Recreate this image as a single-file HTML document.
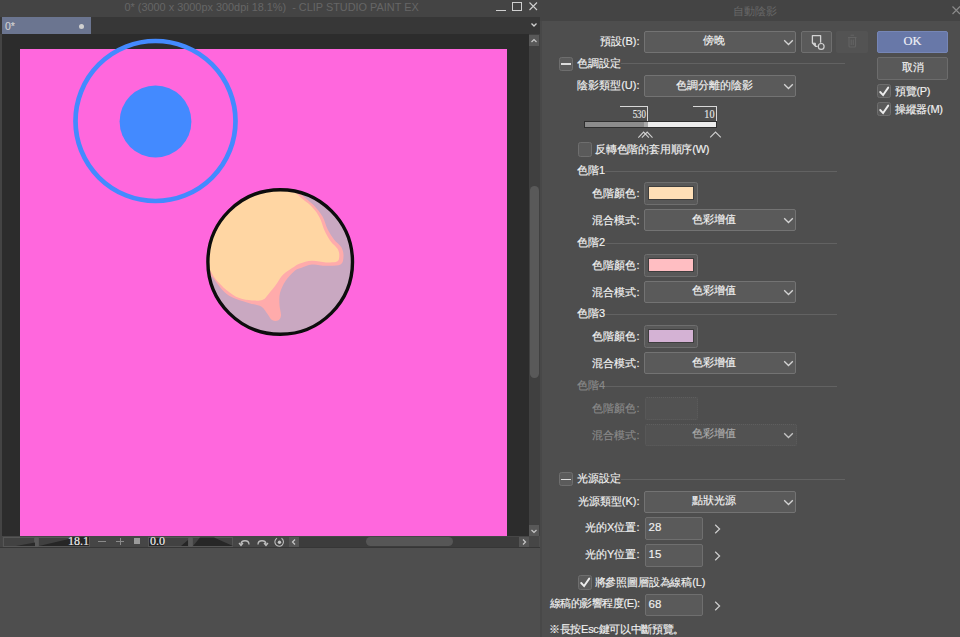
<!DOCTYPE html>
<html><head><meta charset="utf-8">
<style>
*{box-sizing:border-box;margin:0;padding:0}
html,body{width:960px;height:637px;overflow:hidden;background:#4e4e4e;font-family:"Liberation Sans",sans-serif;font-size:11px;color:#f2f2f2}
.a{position:absolute}
.t{position:absolute;white-space:nowrap;line-height:14px;-webkit-text-stroke:0.15px currentColor}
.dd{position:absolute;background:#5a5a5a;border:1px solid #737373;border-radius:2px}
.dd .v{position:absolute;left:0;right:20px;top:3px;text-align:center;line-height:14px;color:#e8e8e8}
.chev{position:absolute;width:8px;height:8px;border-right:1.5px solid #d8d8d8;border-bottom:1.5px solid #d8d8d8;transform:rotate(45deg)}
.sep{position:absolute;height:1px;background:#626262}
.cb{position:absolute;width:14px;height:14px;background:#5c5c5c;border:1px solid #6a6a6a;border-radius:2px}
.sw{position:absolute;width:54px;height:23px;background:#575757;border:1px solid #6a6a6a;border-radius:2px}
.sw i{position:absolute;left:3px;top:4px;width:46px;height:13px}
.inp{position:absolute;width:58px;height:23px;background:#5a5a5a;border:1px solid #6e6e6e;border-radius:2px;padding-left:6px;line-height:20px;color:#e6e6e6}
.arr{position:absolute;width:7px;height:7px;border-right:1.5px solid #cfcfcf;border-top:1.5px solid #cfcfcf;transform:rotate(45deg)}
.lab{text-align:right}
.dis{color:#767676}
</style></head><body>

<!-- ============ APP (left) ============ -->
<div class="a" style="left:0;top:0;width:540px;height:17px;background:#444"></div>
<div class="t" style="left:124.5px;top:0px;color:#666;font-size:10.9px;line-height:14px;-webkit-text-stroke:0">0* (3000 x 3000px 300dpi 18.1%)&nbsp; - CLIP STUDIO PAINT EX</div>
<!-- window buttons -->
<div class="a" style="left:496px;top:10px;width:10px;height:1px;background:#cfcfcf"></div>
<div class="a" style="left:512px;top:2px;width:9.5px;height:9px;border:1px solid #cfcfcf"></div>
<svg class="a" style="left:528px;top:1px" width="11" height="11" viewBox="0 0 11 11"><path d="M1.5 1.5L9 9M9 1.5L1.5 9" stroke="#cfcfcf" stroke-width="1.1"/></svg>

<!-- tab row -->
<div class="a" style="left:0;top:17px;width:540px;height:17px;background:#373737"></div>
<div class="a" style="left:2px;top:17px;width:89px;height:17px;background:#6b7590"></div>
<div class="t" style="left:5px;top:18.5px;color:#d0d0d0;font-size:10.5px">0*</div>
<div class="a" style="left:79px;top:24px;width:5px;height:5px;border-radius:50%;background:#d0d0d0"></div>
<svg class="a" style="left:529px;top:20px" width="10" height="10" viewBox="0 0 10 10"><path d="M2.5 3.5 L5 6 L7.5 3.5" fill="none" stroke="#d0d0d0" stroke-width="1.3"/></svg>

<!-- left strip -->
<div class="a" style="left:0;top:34px;width:2px;height:514px;background:#444"></div>
<!-- canvas bg -->
<div class="a" style="left:2px;top:34px;width:527px;height:502px;background:#2c2c2c"></div>
<!-- pink canvas -->
<div class="a" style="left:19.5px;top:48.5px;width:487.5px;height:487px;background:#ff67dd"></div>
<svg class="a" style="left:0;top:0" width="540" height="540" viewBox="0 0 540 540">
  <defs><clipPath id="cv"><rect x="19.5" y="48.5" width="487.5" height="487"/></clipPath><clipPath id="cp"><circle cx="280.2" cy="262" r="72.5"/></clipPath></defs>
  <circle cx="155.5" cy="121" r="80" fill="none" stroke="#438aff" stroke-width="4.7"/>
  <circle cx="155.5" cy="121.5" r="35.9" fill="#438aff"/>
  <g clip-path="url(#cv)">
  <circle cx="280.2" cy="262" r="72.5" fill="#c9a8c1"/>
  <g clip-path="url(#cp)">
    <path d="M293.0 175.0 C294.1 177.8 296.0 186.9 299.5 192.0 C303.0 197.1 310.2 201.4 314.0 205.5 C317.8 209.6 320.2 212.6 322.5 216.5 C324.8 220.4 325.6 225.2 327.5 229.0 C329.4 232.8 331.7 236.4 334.0 239.5 C336.3 242.6 339.9 244.7 341.5 247.5 C343.1 250.3 343.7 253.7 343.5 256.5 C343.3 259.3 343.4 262.9 340.5 264.5 C337.6 266.1 330.8 265.8 326.0 265.8 C321.2 265.8 316.2 264.1 312.0 264.5 C307.8 264.9 303.9 266.9 301.0 268.0 C298.1 269.1 297.1 268.8 294.5 271.0 C291.9 273.2 287.9 277.3 285.5 281.0 C283.1 284.7 281.0 289.0 280.0 293.0 C279.0 297.0 279.3 301.2 279.5 305.0 C279.7 308.8 281.2 312.9 281.0 315.5 C280.8 318.1 279.5 319.8 278.0 320.5 C276.5 321.2 273.8 321.1 272.0 320.0 C270.2 318.9 269.3 316.2 267.5 314.0 C265.7 311.8 264.6 308.4 261.2 306.5 C257.8 304.6 252.8 304.6 247.0 302.5 C241.2 300.4 232.8 298.7 226.7 294.0 C220.6 289.3 214.6 279.2 210.2 274.5 C205.8 269.8 201.7 267.4 200.0 266.0 L190 266 L190 170 L293 170 Z" fill="#ffabab"/>
    <path d="M290.0 175.0 C291.0 177.9 292.4 187.3 296.0 192.6 C299.6 197.9 307.9 202.5 311.8 206.7 C315.8 210.9 317.6 213.8 319.7 217.7 C321.8 221.6 322.6 226.3 324.4 230.2 C326.2 234.1 328.4 238.1 330.6 241.2 C332.8 244.3 336.2 246.5 337.7 249.0 C339.1 251.5 339.4 253.9 339.3 256.0 C339.2 258.1 339.2 260.5 337.0 261.6 C334.8 262.7 330.2 262.5 326.0 262.4 C321.8 262.3 316.1 260.6 311.8 260.8 C307.5 261.0 302.9 262.5 300.0 263.5 C297.1 264.5 297.0 264.9 294.2 266.7 C291.4 268.5 286.3 271.4 283.2 274.5 C280.1 277.6 277.8 282.4 275.4 285.5 C273.0 288.6 271.1 291.0 269.0 293.4 C266.9 295.8 265.7 298.5 262.8 299.7 C259.9 300.9 255.7 300.7 251.8 300.4 C247.9 300.1 243.4 299.8 239.2 298.1 C235.0 296.4 230.6 293.4 226.7 290.2 C222.8 287.0 218.6 282.6 215.7 279.2 C212.8 275.8 212.0 272.7 209.4 269.8 C206.8 266.9 201.6 263.3 200.0 262.0 L190 262 L190 170 L290 170 Z" fill="#ffd6a3"/>
  </g>
  <circle cx="280.2" cy="262" r="72.3" fill="none" stroke="#0d0d0d" stroke-width="3.4"/>
  </g>
</svg>

<!-- vertical scrollbar -->
<div class="a" style="left:529px;top:34px;width:11px;height:502px;background:#404040"></div>
<div class="a" style="left:529px;top:35px;width:10px;height:11px;background:#585858"></div>
<svg class="a" style="left:529px;top:35.5px" width="10" height="10" viewBox="0 0 10 10"><path d="M2.5 6 L5 3.5 L7.5 6" fill="none" stroke="#c8c8c8" stroke-width="1.2"/></svg>
<div class="a" style="left:529.5px;top:186px;width:9.5px;height:192px;background:#595959;border-radius:5px"></div>
<div class="a" style="left:529px;top:525px;width:10px;height:11px;background:#585858"></div>
<svg class="a" style="left:529px;top:525.5px" width="10" height="10" viewBox="0 0 10 10"><path d="M2.5 4 L5 6.5 L7.5 4" fill="none" stroke="#c8c8c8" stroke-width="1.2"/></svg>

<!-- status bar -->
<div class="a" style="left:2px;top:536px;width:537px;height:11px;background:#464646"></div>
<div class="a" style="left:3px;top:536.5px;width:32px;height:10px;background:#424242;border:1px solid #565656"></div>
<svg class="a" style="left:3px;top:536px" width="33" height="11"><path d="M13 10 L32 6.5 L32 10Z" fill="#2a2a2a"/></svg>
<div class="a" style="left:35px;top:536.5px;width:3px;height:10px;background:#5a5a5a"></div>
<div class="a" style="left:38px;top:536.5px;width:52px;height:10px;background:#404040;border:1px solid #565656"></div>
<svg class="a" style="left:38px;top:536px" width="52" height="11"><path d="M1 10 L33 2.5 L33 1 L51 1 L51 10Z" fill="#262626"/></svg>
<div class="t" style="left:55px;top:535px;width:34px;text-align:right;font-family:'Liberation Serif',serif;font-size:12px;line-height:13px;color:#f0f0f0">18.1</div>
<div class="a" style="left:98px;top:541px;width:8px;height:1px;background:#8a8a8a"></div>
<div class="a" style="left:116px;top:541px;width:8px;height:1px;background:#8a8a8a"></div>
<div class="a" style="left:119.5px;top:538px;width:1px;height:7px;background:#8a8a8a"></div>
<div class="a" style="left:134px;top:538px;width:6px;height:6px;background:#9a9a9a"></div>
<div class="a" style="left:147.5px;top:536.5px;width:41.5px;height:10px;background:#424242;border:1px solid #565656"></div>
<div class="a" style="left:148.5px;top:537.5px;width:15.5px;height:8px;background:#262626"></div>
<svg class="a" style="left:180px;top:537px" width="9" height="9"><path d="M1 9 L8 3 L8 9Z" fill="#262626"/></svg>
<div class="t" style="left:150px;top:535px;font-family:'Liberation Serif',serif;font-size:12px;line-height:13px;color:#f0f0f0">0.0</div>
<div class="a" style="left:189px;top:536.5px;width:2.5px;height:10px;background:#5a5a5a"></div>
<div class="a" style="left:191.5px;top:536.5px;width:41.5px;height:10px;background:#424242;border:1px solid #565656"></div>
<svg class="a" style="left:191.5px;top:536px" width="42" height="11"><path d="M1 10 L8 1.5 L22 1.5 L41 10Z" fill="#272727"/></svg>
<svg class="a" style="left:236px;top:535px" width="52" height="13" viewBox="0 0 52 13">
  <path d="M5 9.5 C5 4.5 13 4.5 13 9.5" fill="none" stroke="#bdbdbd" stroke-width="1.3"/><path d="M3 8 L5 10.5 L7 8" fill="none" stroke="#bdbdbd" stroke-width="1.3"/>
  <path d="M22 9.5 C22 4.5 30 4.5 30 9.5" fill="none" stroke="#bdbdbd" stroke-width="1.3"/><path d="M28 8 L30 10.5 L32 8" fill="none" stroke="#bdbdbd" stroke-width="1.3"/>
  <path d="M41 3.2 A4.3 4.3 0 1 0 45.5 3.3" fill="none" stroke="#bdbdbd" stroke-width="1.1"/><circle cx="43.5" cy="7.2" r="1.7" fill="#c8c8c8"/>
</svg>
<div class="a" style="left:289px;top:536.5px;width:10px;height:10px;background:#555"></div>
<svg class="a" style="left:289px;top:536.5px" width="10" height="10" viewBox="0 0 10 10"><path d="M6 2.5 L3.5 5 L6 7.5" fill="none" stroke="#c8c8c8" stroke-width="1.2"/></svg>
<div class="a" style="left:299px;top:536.5px;width:219.5px;height:10px;background:#3c3c3c"></div>
<div class="a" style="left:365.5px;top:537px;width:87.5px;height:9px;background:#565656;border-radius:5px"></div>
<div class="a" style="left:518.5px;top:536.5px;width:10px;height:10px;background:#555"></div>
<svg class="a" style="left:518.5px;top:536.5px" width="10" height="10" viewBox="0 0 10 10"><path d="M4 2.5 L6.5 5 L4 7.5" fill="none" stroke="#c8c8c8" stroke-width="1.2"/></svg>
<div class="a" style="left:0;top:547px;width:540px;height:1px;background:#363636"></div>

<!-- ============ DIALOG (right) ============ -->
<div class="a" style="left:540px;top:0;width:420px;height:21px;background:#444"></div>
<div class="a" style="left:540px;top:21px;width:1.5px;height:616px;background:#484848"></div>
<div class="t" style="left:733px;top:4px;color:#686868;font-size:11px;-webkit-text-stroke:0">自動陰影</div>
<svg class="a" style="left:951px;top:5px" width="10" height="11"><path d="M1.5 1.5L9 9M9 1.5L1.5 9" stroke="#8a8a8a" stroke-width="1.2"/></svg>
<div class="t lab" style="left:529.5px;top:34px;width:110px">預設(B):</div>
<div class="dd" style="left:644.3px;top:30.5px;width:152px;height:22.5px"></div>
<div class="t" style="left:644.5px;top:33.2px;width:139px;text-align:center;color:#f2f2f2">傍晚</div>
<svg class="a" style="left:783.3px;top:38.5px" width="11" height="7" viewBox="0 0 11 7"><path d="M1.2 1.2 L5.5 5.5 L9.8 1.2" fill="none" stroke="#d4d4d4" stroke-width="1.3"/></svg>
<div class="a" style="left:801px;top:30.5px;width:31px;height:22.5px;background:#5a5a5a;border:1px solid #6f6f6f;border-radius:2px"></div>
<svg class="a" style="left:801px;top:30px" width="31" height="23"><path d="M19.6 12.8 V5.6 H11.4 V13 L14.6 16.4 H16.6" fill="none" stroke="#d2d2d2" stroke-width="1.3" stroke-linejoin="round"/><path d="M11.6 13.2 L14.4 13.2 L14.4 16" fill="#d2d2d2" stroke="#d2d2d2" stroke-width="1"/><circle cx="20.2" cy="16.4" r="2.9" fill="none" stroke="#d2d2d2" stroke-width="1.2"/></svg>
<div class="a" style="left:836px;top:30.5px;width:32px;height:22.5px;background:#535353;border-radius:2px"></div>
<svg class="a" style="left:836px;top:30px" width="32" height="23"><path d="M12 7.5 H20.5 M13 7.5 V16 Q13 17 14 17 H18.5 Q19.5 17 19.5 16 V7.5 M14.5 5.3 H18 M15.2 9.5 V15 M17.3 9.5 V15" fill="none" stroke="#636363" stroke-width="1.1"/></svg>
<div class="a" style="left:877px;top:30.5px;width:71px;height:22.5px;background:#6878a8;border:1px solid #7686b6;border-radius:2px"></div>
<div class="t" style="left:877px;top:33px;width:71px;text-align:center;font-family:'Liberation Serif',serif;font-size:12.5px;line-height:16px;color:#eef0f6">OK</div>
<div class="a" style="left:877px;top:57px;width:71px;height:22.5px;background:#595959;border:1px solid #6c6c6c;border-radius:2px"></div>
<div class="t" style="left:877px;top:59.5px;width:71px;text-align:center">取消</div>
<div class="a" style="left:876.5px;top:83.5px;width:14.5px;height:14.5px;background:#5a5a5a;border:1px solid #6e6e6e;border-radius:2.5px"></div>
<svg class="a" style="left:876.5px;top:83.5px" width="15" height="15" viewBox="0 0 15 15"><path d="M3.2 8 L6.1 11.1 L11.2 3.6" fill="none" stroke="#ececec" stroke-width="1.9" stroke-linecap="round"/></svg>
<div class="t" style="left:895px;top:84px;letter-spacing:-0.3px">預覽(P)</div>
<div class="a" style="left:876.5px;top:101.5px;width:14.5px;height:14.5px;background:#5a5a5a;border:1px solid #6e6e6e;border-radius:2.5px"></div>
<svg class="a" style="left:876.5px;top:101.5px" width="15" height="15" viewBox="0 0 15 15"><path d="M3.2 8 L6.1 11.1 L11.2 3.6" fill="none" stroke="#ececec" stroke-width="1.9" stroke-linecap="round"/></svg>
<div class="t" style="left:895px;top:102px;letter-spacing:-0.3px">操縱器(M)</div>
<div class="a" style="left:559.2px;top:56.8px;width:13.8px;height:14px;background:#5b5b5b;border:1px solid #6e6e6e;border-radius:2.5px"></div>
<div class="a" style="left:561.2px;top:63.199999999999996px;width:9.5px;height:1.5px;background:#dcdcdc"></div>
<div class="t" style="left:577px;top:55.5px">色調設定</div>
<div class="sep" style="left:621px;top:63px;width:224px"></div>
<div class="t lab" style="left:529.5px;top:77.5px;width:110px">陰影類型(U):</div>
<div class="dd" style="left:644.3px;top:75px;width:152px;height:22px"></div>
<div class="t" style="left:644.5px;top:77.7px;width:139px;text-align:center;color:#f2f2f2">色調分離的陰影</div>
<svg class="a" style="left:783.3px;top:83px" width="11" height="7" viewBox="0 0 11 7"><path d="M1.2 1.2 L5.5 5.5 L9.8 1.2" fill="none" stroke="#d4d4d4" stroke-width="1.3"/></svg>
<div class="a" style="left:620px;top:106px;width:27.5px;height:1px;background:#d8d8d8"></div>
<div class="a" style="left:647px;top:106px;width:1px;height:14.5px;background:#d8d8d8"></div>
<div class="t" style="left:605px;top:107px;width:41px;text-align:right;font-family:'Liberation Serif',serif;font-size:12px;color:#e8e8e8;transform:scaleX(0.74);transform-origin:100% 50%">530</div>
<div class="a" style="left:692.5px;top:106px;width:24px;height:1px;background:#d8d8d8"></div>
<div class="a" style="left:716px;top:106px;width:1px;height:14.5px;background:#d8d8d8"></div>
<div class="t" style="left:690px;top:107px;width:24.5px;text-align:right;font-family:'Liberation Serif',serif;font-size:12px;color:#e8e8e8;transform:scaleX(0.85);transform-origin:100% 50%">10</div>
<div class="a" style="left:583.5px;top:120.5px;width:133px;height:7.5px;background:#2e2e2e"></div>
<div class="a" style="left:584.5px;top:121.5px;width:59px;height:5.5px;background:#8c8c8c"></div>
<div class="a" style="left:643.5px;top:121.5px;width:4px;height:5.5px;background:#aaa"></div>
<div class="a" style="left:647.5px;top:121.5px;width:68.5px;height:5.5px;background:#ececec"></div>
<svg class="a" style="left:636px;top:130px" width="90" height="10"><path d="M2.3 7.6 L7.6 2.0 L12.9 7.6 M5.9 7.6 L11.2 2.0 L16.5 7.6" fill="none" stroke="#d0d0d0" stroke-width="1.1"/><path d="M74.2 7.4 L79.5 2.0 L84.8 7.4" fill="none" stroke="#d0d0d0" stroke-width="1.1"/></svg>
<div class="a" style="left:577.5px;top:142px;width:14.5px;height:14.5px;background:#5a5a5a;border:1px solid #6e6e6e;border-radius:2.5px"></div>
<div class="t" style="left:595px;top:142px;letter-spacing:-0.2px">反轉色階的套用順序(W)</div>
<div class="t" style="left:577px;top:163px;">色階1</div>
<div class="sep" style="left:605px;top:171px;width:232px"></div>
<div class="t lab" style="left:529.5px;top:186px;width:110px">色階顏色:</div>
<div class="a" style="left:644.3px;top:182px;width:53.5px;height:23px;background:#585858;border:1px solid #6e6e6e;border-radius:2.5px"></div>
<div class="a" style="left:648.2px;top:186.2px;width:46.3px;height:14.3px;background:#ffdfb6;border:1px solid #3e3e3e"></div>
<div class="t lab" style="left:529.5px;top:213px;width:110px">混合模式:</div>
<div class="dd" style="left:644.3px;top:209px;width:152px;height:22px"></div>
<div class="t" style="left:644.5px;top:211.7px;width:139px;text-align:center;color:#f2f2f2">色彩增值</div>
<svg class="a" style="left:783.3px;top:217px" width="11" height="7" viewBox="0 0 11 7"><path d="M1.2 1.2 L5.5 5.5 L9.8 1.2" fill="none" stroke="#d4d4d4" stroke-width="1.3"/></svg>
<div class="t" style="left:577px;top:234.5px;">色階2</div>
<div class="sep" style="left:605px;top:242.5px;width:232px"></div>
<div class="t lab" style="left:529.5px;top:257.5px;width:110px">色階顏色:</div>
<div class="a" style="left:644.3px;top:253.5px;width:53.5px;height:23px;background:#585858;border:1px solid #6e6e6e;border-radius:2.5px"></div>
<div class="a" style="left:648.2px;top:257.7px;width:46.3px;height:14.3px;background:#ffbec2;border:1px solid #3e3e3e"></div>
<div class="t lab" style="left:529.5px;top:284.5px;width:110px">混合模式:</div>
<div class="dd" style="left:644.3px;top:280.5px;width:152px;height:22px"></div>
<div class="t" style="left:644.5px;top:283.2px;width:139px;text-align:center;color:#f2f2f2">色彩增值</div>
<svg class="a" style="left:783.3px;top:288.5px" width="11" height="7" viewBox="0 0 11 7"><path d="M1.2 1.2 L5.5 5.5 L9.8 1.2" fill="none" stroke="#d4d4d4" stroke-width="1.3"/></svg>
<div class="t" style="left:577px;top:306px;">色階3</div>
<div class="sep" style="left:605px;top:314px;width:232px"></div>
<div class="t lab" style="left:529.5px;top:329px;width:110px">色階顏色:</div>
<div class="a" style="left:644.3px;top:325px;width:53.5px;height:23px;background:#585858;border:1px solid #6e6e6e;border-radius:2.5px"></div>
<div class="a" style="left:648.2px;top:329.2px;width:46.3px;height:14.3px;background:#d4b2d4;border:1px solid #3e3e3e"></div>
<div class="t lab" style="left:529.5px;top:356px;width:110px">混合模式:</div>
<div class="dd" style="left:644.3px;top:352px;width:152px;height:22px"></div>
<div class="t" style="left:644.5px;top:354.7px;width:139px;text-align:center;color:#f2f2f2">色彩增值</div>
<svg class="a" style="left:783.3px;top:360px" width="11" height="7" viewBox="0 0 11 7"><path d="M1.2 1.2 L5.5 5.5 L9.8 1.2" fill="none" stroke="#d4d4d4" stroke-width="1.3"/></svg>
<div class="t" style="left:577px;top:377.7px;color:#8a8a8a">色階4</div>
<div class="sep" style="left:605px;top:385.7px;width:232px"></div>
<div class="t lab" style="left:529.5px;top:400.7px;width:110px;color:#8a8a8a">色階顏色:</div>
<div class="a" style="left:644.5px;top:397.2px;width:53.5px;height:22.5px;background:#525252;border:1px dotted #5e5e5e;border-radius:2px"></div>
<div class="t lab" style="left:529.5px;top:427.7px;width:110px;color:#8a8a8a">混合模式:</div>
<div class="a" style="left:644.5px;top:423.7px;width:152.5px;height:22px;background:#525252;border:1px dotted #5e5e5e;border-radius:2px"></div>
<div class="t" style="left:644.5px;top:426.4px;width:139px;text-align:center;color:#ababab">色彩增值</div>
<svg class="a" style="left:783.3px;top:431.7px" width="11" height="7" viewBox="0 0 11 7"><path d="M1.2 1.2 L5.5 5.5 L9.8 1.2" fill="none" stroke="#c4c4c4" stroke-width="1.3"/></svg>
<div class="a" style="left:559.2px;top:472.3px;width:13.8px;height:14px;background:#5b5b5b;border:1px solid #6e6e6e;border-radius:2.5px"></div>
<div class="a" style="left:561.2px;top:478.7px;width:9.5px;height:1.5px;background:#dcdcdc"></div>
<div class="t" style="left:577px;top:471px">光源設定</div>
<div class="sep" style="left:621px;top:479px;width:224px"></div>
<div class="t lab" style="left:529.5px;top:493.5px;width:110px">光源類型(K):</div>
<div class="dd" style="left:644.3px;top:490.5px;width:152px;height:22.5px"></div>
<div class="t" style="left:644.5px;top:493.2px;width:139px;text-align:center;color:#f2f2f2">點狀光源</div>
<svg class="a" style="left:783.3px;top:498.5px" width="11" height="7" viewBox="0 0 11 7"><path d="M1.2 1.2 L5.5 5.5 L9.8 1.2" fill="none" stroke="#d4d4d4" stroke-width="1.3"/></svg>
<div class="t lab" style="left:529.5px;top:519.5px;width:110px">光的X位置:</div>
<div class="a" style="left:644.5px;top:517.2px;width:58px;height:22.5px;background:#5a5a5a;border:1px solid #6f6f6f;border-radius:2px"></div>
<div class="t" style="left:648.5px;top:520.2px;font-size:11.5px;color:#f0f0f0">28</div>
<svg class="a" style="left:713.5px;top:523.7px" width="7" height="10" viewBox="0 0 7 10"><path d="M1.2 0.8 L5.6 5 L1.2 9.2" fill="none" stroke="#cfcfcf" stroke-width="1.2"/></svg>
<div class="t lab" style="left:529.5px;top:546.5px;width:110px">光的Y位置:</div>
<div class="a" style="left:644.5px;top:544px;width:58px;height:22.5px;background:#5a5a5a;border:1px solid #6f6f6f;border-radius:2px"></div>
<div class="t" style="left:648.5px;top:547px;font-size:11.5px;color:#f0f0f0">15</div>
<svg class="a" style="left:713.5px;top:550.5px" width="7" height="10" viewBox="0 0 7 10"><path d="M1.2 0.8 L5.6 5 L1.2 9.2" fill="none" stroke="#cfcfcf" stroke-width="1.2"/></svg>
<div class="a" style="left:577.5px;top:575px;width:14.5px;height:14.5px;background:#5a5a5a;border:1px solid #6e6e6e;border-radius:2.5px"></div>
<svg class="a" style="left:577.5px;top:575px" width="15" height="15" viewBox="0 0 15 15"><path d="M3.2 8 L6.1 11.1 L11.2 3.6" fill="none" stroke="#ececec" stroke-width="1.9" stroke-linecap="round"/></svg>
<div class="t" style="left:594.5px;top:574.5px;letter-spacing:-0.15px">將參照圖層設為線稿(L)</div>
<div class="t lab" style="left:539.5px;top:595.5px;width:100px;letter-spacing:-0.45px">線稿的影響程度(E):</div>
<div class="a" style="left:644.5px;top:594px;width:58px;height:22px;background:#5a5a5a;border:1px solid #6f6f6f;border-radius:2px"></div>
<div class="t" style="left:648.5px;top:597px;font-size:11.5px;color:#f0f0f0">68</div>
<svg class="a" style="left:713.5px;top:600.5px" width="7" height="10" viewBox="0 0 7 10"><path d="M1.2 0.8 L5.6 5 L1.2 9.2" fill="none" stroke="#cfcfcf" stroke-width="1.2"/></svg>
<div class="t" style="left:549px;top:622px;letter-spacing:-0.3px">※長按Esc鍵可以中斷預覽。</div>
</body></html>
